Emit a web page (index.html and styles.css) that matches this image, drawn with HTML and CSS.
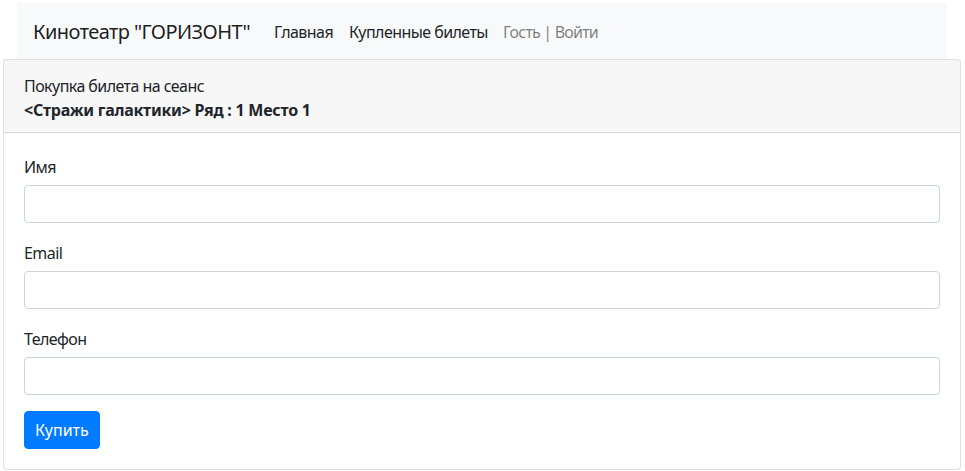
FILE: index.html
```html
<!DOCTYPE html>
<html lang="ru">
<head>
<meta charset="utf-8">
<title>Кинотеатр</title>
<link rel="stylesheet" href="styles.css">
</head>
<body>
<div class="page">
  <nav class="navbar">
    <a class="brand" href="#">Кинотеатр "ГОРИЗОНТ"</a>
    <div class="nav">
      <a class="nav-link dark" href="#">Главная</a>
      <a class="nav-link dark" href="#">Купленные билеты</a>
      <a class="nav-link muted" href="#">Гость | Войти</a>
    </div>
  </nav>
  <div class="card">
    <div class="card-header">
      <div>Покупка билета на сеанс</div>
      <div class="bold">&lt;Стражи галактики&gt; Ряд : 1 Место 1</div>
    </div>
    <form class="card-body">
      <div class="form-group">
        <label class="label">Имя</label>
        <input class="input" type="text">
      </div>
      <div class="form-group">
        <label class="label">Email</label>
        <input class="input" type="text">
      </div>
      <div class="form-group">
        <label class="label">Телефон</label>
        <input class="input" type="text">
      </div>
      <button class="btn" type="button">Купить</button>
    </form>
  </div>
</div>
</body>
</html>
```

FILE: styles.css
```css
* { box-sizing: border-box; }
html, body { margin: 0; padding: 0; background: #fff; }
body {
  font-family: "Noto Sans", "Open Sans", sans-serif;
  font-size: 16px;
  line-height: 1.5;
  color: #212529;
  letter-spacing: -0.035em;
}
.page {
  padding: 3px 4px 0 3px;
}
.navbar {
  display: flex;
  align-items: center;
  background: #f8f9fa;
  margin: 0 14px 0 14px;
  padding: 9px 16px 7px;
  height: 56px;
}
.brand {
  font-size: 20px;
  line-height: 30px;
  padding: 5px 0;
  margin-right: 16px;
  color: rgba(0,0,0,.9);
  text-decoration: none;
  white-space: nowrap;
}
.nav { display: flex; }
.nav-link {
  padding: 8px 8px;
  text-decoration: none;
  white-space: nowrap;
}
.nav-link.muted { padding-left: 7px; }
.nav-link.dark { color: #212529; }
.nav-link.muted { color: rgba(0,0,0,.5); letter-spacing: -0.05em; }
.card {
  border: 1px solid rgba(0,0,0,.125);
  border-radius: 4px;
  background: #fff;
}
.card-header {
  padding: 14px 20px 10px;
  background: rgba(0,0,0,.03);
  border-bottom: 1px solid rgba(0,0,0,.125);
}
.bold { font-weight: 700; letter-spacing: -0.015em; }
.card-body { padding: 20px; margin: 0; }
.form-group { margin-bottom: 16px; }
.label { display: block; margin-bottom: 6px; padding-top: 2px; }
.input {
  display: block;
  width: 100%;
  height: 38px;
  padding: 6px 12px;
  font: inherit;
  color: #495057;
  background: #fff;
  border: 1px solid #ced4da;
  border-radius: 4px;
}
.btn {
  font: inherit;
  color: #fff;
  background: #007bff;
  border: 1px solid #007bff;
  border-radius: 4px;
  padding: 6px 10px;
  height: 38px;
}
```
